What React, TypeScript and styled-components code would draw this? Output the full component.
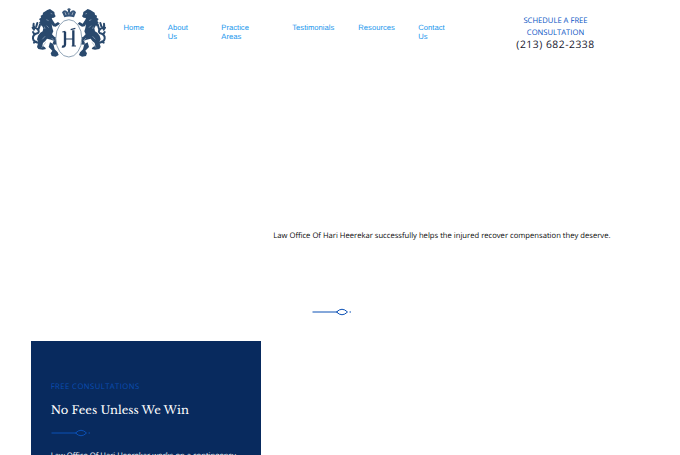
import React from "react";
import styled, { createGlobalStyle } from "styled-components";

const GlobalStyle = createGlobalStyle`
  * { box-sizing: border-box; }
  body { margin: 0; background: #fff; overflow: hidden; }
`;
const Page = styled.div`
  width: 680px;
  height: 455px;
  overflow: hidden;
  color: #080808;
  font: 7.65px/12px "Open Sans", "Noto Sans", sans-serif;
  text-rendering: geometricPrecision;
`;
const Header = styled.header`
  display: flex;
  height: 66px;
  padding-left: 26px;
`;
const Logo = styled.svg`
  width: 86px;
  height: 60px;
  margin-top: 2px;
  flex: none;
`;
const Nav = styled.nav`
  display: grid;
  grid-template-columns: 44.3px 53.5px 71px 66px 60px 40px;
  width: 376px;
  margin-left: 11.5px;
  padding-top: 23px;
  flex: none;
`;
const NavLink = styled.a`
  color: #2297ed;
  font: 7.65px/9px "Liberation Sans", sans-serif;
  white-space: pre-line;
`;
const Contact = styled.div`
  width: 112px;
  padding-top: 16px;
  text-align: center;
`;
const Schedule = styled.div`
  color: #0753c4;
  line-height: 11.5px;
`;
const Phone = styled.div`
  color: #14142b;
  font-size: 10.3px;
  line-height: 13px;
  letter-spacing: 0.53px;
  white-space: nowrap;
`;
const Intro = styled.p`
  margin: 164px 0 0 273.3px;
  white-space: nowrap;
`;
const Divider = styled.div`
  height: 8px;
  margin: 66px 0 0 312px;
`;
const Ornament = styled.svg`
  display: block;
  width: 40px;
  height: 8px;
  fill: none;
  stroke: #0b50b5;
`;
const Card = styled.section`
  width: 229.6px;
  height: 160px;
  margin: 25px 0 0 31.4px;
  padding: 40px 19.3px;
  background: #082a5e;
  color: #fff;
`;
const Eyebrow = styled.div`
  color: #0b4eb3;
  font-size: 7.65px;
  font-weight: 500;
  letter-spacing: 0.46px;
  white-space: nowrap;
`;
const Title = styled.h2`
  margin: 10px 0 8.5px;
  font: 400 11.5px/17px "Libre Baskerville", "Liberation Serif", serif;
  white-space: nowrap;
`;
const CardText = styled.p`
  margin: 13px 0 0;
  white-space: nowrap;
`;

const links = ["Home", "About\nUs", "Practice\nAreas", "Testimonials", "Resources", "Contact\nUs"];

const Flourish = () => (
  <Ornament viewBox="0 0 40 8">
    <path d="M.5 4H26" strokeWidth="1" />
    <path d="M24.5 4q5.5-5.5 11 0q-5.5 5.5-11 0Z" strokeWidth="1" />
    <path d="M37.5 4h1.5" strokeWidth="1" />
  </Ornament>
);

const Lion = () => (
  <g>
    <path
      fill="#29496d"
      d="M64 24l8-3 5 4 8 5 1 7 3 6-5 4-7 1 2 5 8 12 9-5 6 5-5 4-8 5-8-1-4-6 2 11 3 10-4 9 7 7 8 3 1 8-4 7 4 5-10 1-4-4 3-8-8-3-12-3-5 7-7 6-2 8 8 5 3 5-10 2-13-2-4-6 4-14-4-9 3-11 7-9 7-4 2-9-5-9-3 4-1-9-4-3 4-5-4-6 6-4-1-6 6-3 1-6Z"
    />
    <path fill="#29496d" d="M72 121l10 5 4 16 9 9 3 8-9 5-12-2-3-8 5-8-11-11Z" />
    <path
      fill="none"
      stroke="#29496d"
      strokeWidth="6"
      strokeLinecap="round"
      d="M43 123Q22 121 21 110Q19 97 36 93Q42 88 33 80Q20 76 23 65M24 83l-4-6M37 84l5-17M31 73l3-10M26 98l-5-8M31 119l-7 3"
    />
    <path
      fill="none"
      stroke="#9aacc0"
      strokeWidth="2"
      d="M74 34l5 2M61 53l7 3M62 71l6 6M57 103l-8 9M59 121l-12 16M77 108l8 9M55 74l2 7"
    />
  </g>
);

export default function App() {
  return (
    <Page>
      <GlobalStyle />
      <Header>
        <Logo viewBox="0 0 258 180" aria-label="Law Office of Hari Heerekar">
          <Lion />
          <g transform="translate(257 0) scale(-1 1)"><Lion /></g>
          <ellipse cx="128.5" cy="109" rx="39" ry="56" fill="#fff" stroke="#7890a7" strokeWidth="2.5" />
          <path d="M108 31q6-9 13-5l4 5 1-7h6l1 7 4-5q8-4 13 5l-6 15q-15-5-29 0Z" fill="#36557a" />
          <path d="M129 18v10M124 22h10M115 36h4M126 36h6M138 36h4" fill="none" stroke="#29496d" strokeWidth="3" />
          <path d="M117 31l3 8M128.5 32v6M141 31l-3 8" stroke="#d2dae3" strokeWidth="2" />
          <g fill="none" stroke="#223f63">
            <path d="M117 89v38q-1 9-9 6M142 85v47" strokeWidth="7" />
            <path d="M109 90l9-2M134 83l14-4M117 111h25M137 132h13" strokeWidth="3.5" />
          </g>
        </Logo>
        <Nav>{links.map((link) => <NavLink key={link}>{link}</NavLink>)}</Nav>
        <Contact>
          <Schedule>SCHEDULE A FREE<br />CONSULTATION</Schedule>
          <Phone>(213) 682-2338</Phone>
        </Contact>
      </Header>
      <Intro>Law Office Of Hari Heerekar successfully helps the injured recover compensation they deserve.</Intro>
      <Divider><Flourish /></Divider>
      <Card>
        <Eyebrow>FREE CONSULTATIONS</Eyebrow>
        <Title>No Fees Unless We Win</Title>
        <Flourish />
        <CardText>Law Office Of Hari Heerekar works on a contingency</CardText>
      </Card>
    </Page>
  );
}
